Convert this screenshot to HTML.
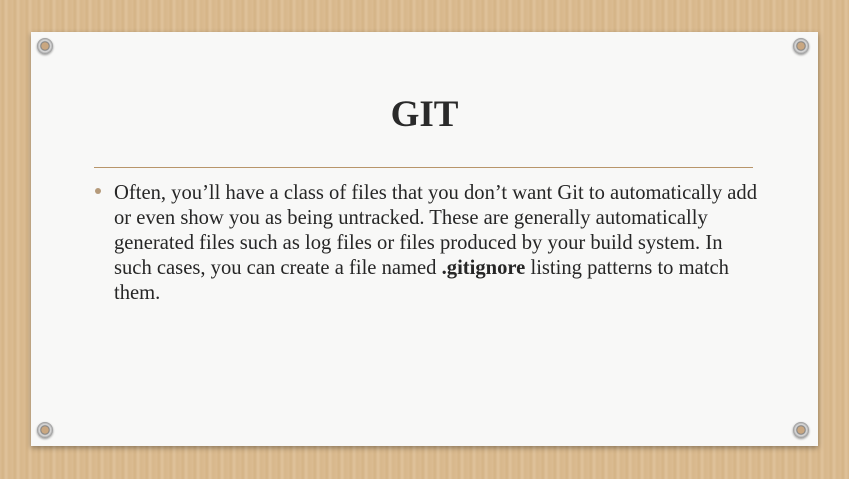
<!DOCTYPE html>
<html><head><meta charset="utf-8"><style>
html,body{margin:0;padding:0}
body{width:849px;height:479px;overflow:hidden;position:relative;
background:repeating-linear-gradient(90deg,#dcbd93 0px,#d4b386 3px,#e0c39c 6px,#d7b78b 9px,#dbbb90 12px);}
.slide{position:absolute;left:31px;top:32px;width:787px;height:414px;background:#f8f8f7;box-shadow:0 2px 5px rgba(0,0,0,.35);}
.pin{position:absolute;width:16px;height:16px;border-radius:50%;background:radial-gradient(circle,#c9a781 0 3.5px,#7a7a7a 4px,#dedede 5.5px,#959595 8px);box-shadow:0 1px 2px rgba(0,0,0,.4)}
h1{position:absolute;left:0;right:0;top:93px;margin:0;text-align:center;font:bold 37px "Liberation Serif",serif;color:#2a2a2a}
.rule{position:absolute;left:94px;top:167px;width:659px;height:1px;background:#b8956a}
.txt{position:absolute;left:114px;top:181px;width:700px;font:20.6px/24.9px "Liberation Serif",serif;color:#262626;white-space:nowrap}
.bul{position:absolute;left:95px;top:188px;width:6px;height:6px;border-radius:50%;background:#b59a7a}
</style></head><body>
<div class="slide"></div>
<div class="pin" style="left:37px;top:38px"></div>
<div class="pin" style="left:793px;top:38px"></div>
<div class="pin" style="left:37px;top:422px"></div>
<div class="pin" style="left:793px;top:422px"></div>
<h1>GIT</h1>
<div class="rule"></div>
<div class="bul"></div>
<div class="txt">Often, you’ll have a class of files that you don’t want Git to automatically add<br>or even show you as being untracked. These are generally automatically<br>generated files such as log files or files produced by your build system. In<br>such cases, you can create a file named <b>.gitignore</b> listing patterns to match<br>them.</div>
</body></html>
